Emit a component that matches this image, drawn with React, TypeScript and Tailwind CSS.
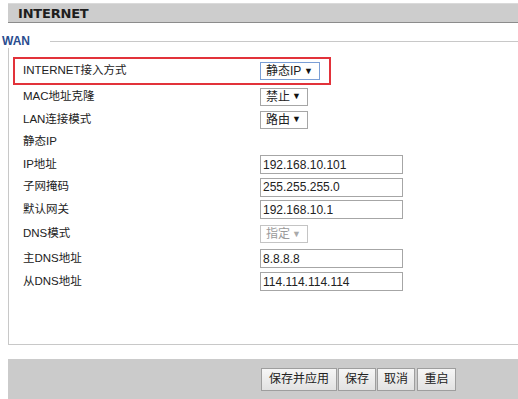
import React from "react";

const font = { fontFamily: '"Liberation Sans", "Noto Sans CJK SC", sans-serif' };

function Sel({ text, w, focus, disabled }: { text: string; w: number; focus?: boolean; disabled?: boolean }) {
  return (
    <div
      className={`flex items-center justify-between h-[18px] pl-[5px] pr-[6px] bg-white border ${
        focus ? "border-[#7b9fd6]" : disabled ? "border-[#c4c4c4]" : "border-[#a6a6a6]"
      } ${disabled ? "text-[#9a9a9a]" : "text-[#222]"} text-[12px] leading-none`}
      style={{ width: w }}
    >
      <span>{text}</span>
      <span className={`text-[9px] ${disabled ? "text-[#aaa]" : "text-[#111]"}`}>▼</span>
    </div>
  );
}

function Inp({ v }: { v: string }) {
  return (
    <div className="w-[143px] h-[19px] border border-[#a6a6a6] bg-white flex items-center pl-[2px] text-[12px] text-[#222] leading-none">
      {v}
    </div>
  );
}

function Row({ h, label, children }: { h: number; label: string; children?: React.ReactNode }) {
  return (
    <div className="flex items-center" style={{ height: h }}>
      <div className="w-[251px] pl-[14px] text-[11.5px] text-[#222] leading-none">{label}</div>
      {children}
    </div>
  );
}

export default function App() {
  return (
    <div className="w-[518px] h-[399px] bg-white overflow-hidden relative" style={font}>
      <div className="mt-[3px] ml-[8px] h-[20px] bg-[#cdcdcd] border-t border-[#dadada] border-b border-b-[#8c8c8c] flex items-center pl-[10px]">
        <span
          className="text-[13px] font-bold text-[#1e1e1e] tracking-[-0.2px] leading-none pt-[1px]"
          style={{ fontFamily: '"DejaVu Sans", sans-serif' }}
        >
          INTERNET
        </span>
      </div>
      <div className="h-[25px] flex items-end">
        <div className="flex items-center w-full h-[14px]">
          <span className="ml-[2px] text-[12px] font-bold text-[#2a4d8f] leading-none">WAN</span>
          <div className="ml-[20px] flex-1 h-px bg-[#c8c8c8]" />
        </div>
      </div>
      <div className="ml-[8px] h-[297px] border-l border-b border-[#c8c8c8] pt-[9px]">
        <div className="ml-[4px] w-[318px] h-[28px] border-2 border-[#e2323a] flex items-center">
          <div className="w-[245px] pl-[8px] text-[11.5px] text-[#222] leading-none">INTERNET接入方式</div>
          <Sel text="静态IP" w={60} focus />
        </div>
        <Row h={23} label="MAC地址克隆">
          <Sel text="禁止" w={48} />
        </Row>
        <Row h={23} label="LAN连接模式">
          <Sel text="路由" w={48} />
        </Row>
        <Row h={22} label="静态IP" />
        <Row h={23} label="IP地址">
          <Inp v="192.168.10.101" />
        </Row>
        <Row h={22} label="子网掩码">
          <Inp v="255.255.255.0" />
        </Row>
        <Row h={23} label="默认网关">
          <Inp v="192.168.10.1" />
        </Row>
        <Row h={26} label="DNS模式">
          <Sel text="指定" w={48} disabled />
        </Row>
        <Row h={23} label="主DNS地址">
          <Inp v="8.8.8.8" />
        </Row>
        <Row h={23} label="从DNS地址">
          <Inp v="114.114.114.114" />
        </Row>
      </div>
      <div className="mt-[14px] ml-[8px] h-[40px] bg-[#cbcbcb] flex items-center pl-[253px] gap-[1px]">
        {["保存并应用", "保存", "取消", "重启"].map((t, i) => (
          <button
            key={t}
            className={`h-[23px] border border-[#9e9e9e] bg-gradient-to-b from-[#f6f6f6] to-[#e2e2e2] text-[12px] text-[#222] leading-none ${
              i === 0 ? "w-[76px]" : i === 3 ? "w-[39px] ml-[1px]" : "w-[38px]"
            }`}
          >
            {t}
          </button>
        ))}
      </div>
    </div>
  );
}
